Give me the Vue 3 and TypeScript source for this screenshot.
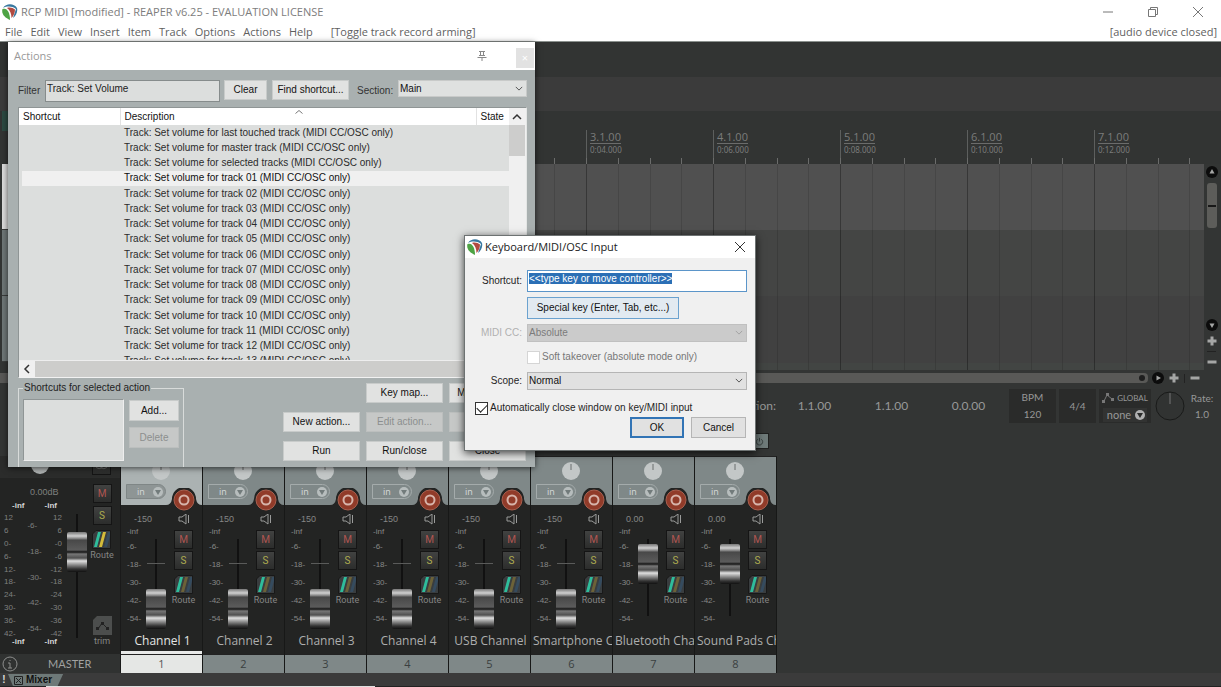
<script setup lang="ts">
import { onMounted, ref } from 'vue'

interface Channel {
  id: number
  name: string
  level: string
  value: number
}

const menus = ['File', 'Edit', 'View', 'Insert', 'Item', 'Track', 'Options', 'Actions', 'Help']

const bars = [1, 2, 3, 4, 5, 6, 7].map((n) => ({
  n,
  bar: `${n}.1.00`,
  time: `0:${String((n - 1) * 2).padStart(2, '0')}.000`,
}))
const firstLabelled = 3

const targets = [
  'last touched track',
  'master track',
  'selected tracks',
  ...Array.from({ length: 13 }, (_, i) => `track ${String(i + 1).padStart(2, '0')}`),
]
const actions = targets.map((t) => `Track: Set volume for ${t} (MIDI CC/OSC only)`)
const selectedAction = 3

const channels: Channel[] = [
  { id: 1, name: 'Channel 1', level: '-150', value: 0 },
  { id: 2, name: 'Channel 2', level: '-150', value: 0 },
  { id: 3, name: 'Channel 3', level: '-150', value: 0 },
  { id: 4, name: 'Channel 4', level: '-150', value: 0 },
  { id: 5, name: 'USB Channel', level: '-150', value: 0 },
  { id: 6, name: 'Smartphone Channel', level: '-150', value: 0 },
  { id: 7, name: 'Bluetooth Channel', level: '0.00', value: 90 },
  { id: 8, name: 'Sound Pads Channel', level: '0.00', value: 90 },
]

const scale = ['-6-', '-18-', '-30-', '-42-', '-54-']
const masterLeft = ['12', '6', '0-', '6-', '12-', '18-', '24-', '30-', '36-', '42-']
const masterRight = ['12', '6', '-0', '-6', '-12', '-18', '-24', '-30', '-36', '-42']

const filter = ref('Track: Set Volume')
const shortcut = ref('<<type key or move controller>>')
const shortcutBox = ref<HTMLInputElement | null>(null)

onMounted(() => {
  shortcutBox.value?.focus()
  shortcutBox.value?.select()
})
</script>

<template>
  <div class="app">
    <header class="titlebar">
      <svg class="logo" viewBox="0 0 16 16" aria-hidden="true">
        <path d="M1 4C4 -1 12 -1 15 4C16 8 14 12 11 14L14 5C10 2 5 2 1 4Z" fill="#3878a0" />
        <path d="M0.5 5C3 4 5 5 6.500 8C7.500 10 8 13 8 16C3 14 -1 10 0.500 5Z" fill="#4ea344" />
        <path d="M5 4C8 3 11 4 13 5.500C13 9 11.500 12 9.500 14C9.500 10 8 6 5 4Z" fill="#b24a41" />
      </svg>
      <h1>RCP MIDI [modified] - REAPER v6.25 - EVALUATION LICENSE</h1>
      <div class="window-controls">
        <button aria-label="Minimize"><svg viewBox="0 0 12 12"><path d="M1 6H11" /></svg></button>
        <button aria-label="Restore"><svg viewBox="0 0 12 12"><path d="M1.5 3.5H8.5V10.5H1.5ZM3.5 3.5V1.5H10.5V8.5H8.5" /></svg></button>
        <button aria-label="Close"><svg viewBox="0 0 12 12"><path d="M1 1L11 11M11 1L1 11" /></svg></button>
      </div>
    </header>

    <nav class="menubar">
      <button v-for="m in menus" :key="m">{{ m }}</button>
      <span class="last-action">[Toggle track record arming]</span>
      <span class="device">[audio device closed]</span>
    </nav>

    <div class="toolbar"></div>
    <div class="band"></div>

    <div class="ruler">
      <div class="ruler-head"><i></i></div>
      <div class="bars">
        <div v-for="b in bars" :key="b.bar" class="bar">
          <div class="bar-label"><template v-if="b.n >= firstLabelled"><span>{{ b.bar }}</span><small>{{ b.time }}</small></template></div>
          <div class="beats"><i></i><i></i><i></i><i></i></div>
        </div>
      </div>
    </div>

    <div class="arrange">
      <div class="tracks"><i class="first"></i><i></i><i></i></div>
      <div class="lanes">
        <div class="lane-grid">
          <div v-for="b in bars" :key="b.bar" class="lane-bar"><i></i><i></i><i></i><i></i></div>
        </div>
      </div>
      <div class="vscroll">
        <button class="round" aria-label="Scroll up"><svg viewBox="0 0 12 12"><circle cx="6" cy="6" r="6" /><path d="M6 3L8.500 7.500H3.500Z" /></svg></button>
        <div class="vthumb"><i></i></div>
        <span class="grow"></span>
        <button class="round" aria-label="Scroll down"><svg viewBox="0 0 12 12"><circle cx="6" cy="6" r="6" /><path d="M6 9L8.500 4.500H3.500Z" /></svg></button>
        <button class="round" aria-label="Zoom in"><svg viewBox="0 0 12 12"><path d="M4.500 1.500H7.500V4.500H10.500V7.500H7.500V10.500H4.500V7.500H1.500V4.500H4.500Z" /></svg></button>
        <hr />
        <button class="round" aria-label="Zoom out"><svg viewBox="0 0 12 12"><path d="M1.500 4.500H10.500V7.500H1.500Z" /></svg></button>
      </div>
    </div>

    <div class="hscroll">
      <div class="hthumb"><i></i></div>
      <button class="round" aria-label="Scroll right"><svg viewBox="0 0 12 12"><circle cx="6" cy="6" r="6" /><path d="M4.500 3.500L9 6L4.500 8.500Z" /></svg></button>
      <button class="round" aria-label="Zoom in"><svg viewBox="0 0 12 12"><path d="M4.500 1.500H7.500V4.500H10.500V7.500H7.500V10.500H4.500V7.500H1.500V4.500H4.500Z" /></svg></button>
      <hr />
      <button class="round" aria-label="Zoom out"><svg viewBox="0 0 12 12"><path d="M1.500 4.500H10.500V7.500H1.500Z" /></svg></button>
    </div>

    <div class="transport">
      <span>Selection:</span>
      <span class="time">1.1.00</span>
      <span class="time">1.1.00</span>
      <span class="time">0.0.00</span>
      <div class="tbox bpm"><span>BPM</span><span>120</span></div>
      <div class="tbox sig"><span>4/4</span></div>
      <div class="tbox global">
        <span class="global-title">
          <svg viewBox="0 0 13 10"><path d="M2 8L5 2L10 6" /><path class="dots" d="M0 7H3V10H0ZM4 0H7V3H4ZM9 5H12V8H9Z" /></svg>
          GLOBAL
        </span>
        <button class="none">none <svg viewBox="0 0 12 12"><circle cx="6" cy="6" r="5" /><path d="M6 9L9 4H3Z" /></svg></button>
      </div>
      <svg class="dial" viewBox="0 0 30 30" aria-hidden="true"><circle cx="15" cy="15" r="14" /><path d="M15 2V13" /></svg>
      <div class="rate"><span>Rate:</span><span>1.0</span></div>
    </div>

    <div class="gap">
      <button class="power" aria-label="Bypass effects"><svg viewBox="0 0 10 10"><path d="M3 2.5A3.5 3.5 0 1 0 7 2.5M5 1V5" /></svg></button>
    </div>

    <div class="mixer">
      <section class="master">
        <div class="master-top">
          <svg class="knob" viewBox="0 0 18 18"><circle cx="9" cy="9" r="9" /><path d="M9 2V8" /></svg>
          <button class="sq" aria-label="Mono"><svg viewBox="0 0 19 19"><circle cx="7" cy="9" r="4" /><circle cx="12" cy="9" r="4" /></svg></button>
        </div>
        <div class="master-body">
          <div class="meters">
            <span class="db">0.00dB</span>
            <div class="inf"><b>-inf</b><b>-inf</b></div>
            <div class="scales">
              <div class="sc left"><span v-for="s in masterLeft" :key="s">{{ s }}</span></div>
              <div class="sc mid"><span v-for="s in scale" :key="s">{{ s }}</span></div>
              <div class="sc right"><span v-for="s in masterRight" :key="s">{{ s }}</span></div>
            </div>
            <div class="inf"><b>-inf</b><b>-inf</b></div>
          </div>
          <input class="fader master-fader" type="range" min="0" max="100" value="79" aria-label="Master volume" />
          <div class="buttons">
            <button class="sq mute">M</button>
            <button class="sq solo">S</button>
            <button class="route lit">
              <svg viewBox="0 0 19 19"><path class="bg" d="M4 0.500H18.500V18.500H0.500V4Z" /><path class="g" d="M6 2H9L5 17H2Z" /><path class="y" d="M11 2H14L10 17H7Z" /><path class="b" d="M16 2H18V6L15 17H12Z" /></svg>
              Route
            </button>
            <span class="grow"></span>
            <button class="route">
              <svg viewBox="0 0 19 19"><path class="trim-bg" d="M4 0H19V19H0V4Z" /><path class="trim-line" d="M5 13L9 7L14 12" /><path class="trim-dots" d="M3 11H6V14H3ZM8 6H11V9H8ZM13 11H16V14H13Z" /></svg>
              trim
            </button>
          </div>
        </div>
        <div class="master-name"><svg viewBox="0 0 16 16"><circle cx="8" cy="8" r="7" /><path d="M8 7V12M6 7H8M6 12H10M8 4V5" /></svg><span>MASTER</span></div>
      </section>

      <section v-for="c in channels" :key="c.id" class="channel" :class="{ selected: c.id === 1 }">
        <div class="ch-head">
          <svg class="knob" viewBox="0 0 18 18"><circle cx="9" cy="9" r="9" /><path d="M9 2V8" /></svg>
          <button class="in"><span>in</span><svg viewBox="0 0 12 12"><circle cx="6" cy="6" r="5" /><path d="M3 4H9L6 9Z" /></svg></button>
          <button class="rec" aria-label="Record arm">
            <svg viewBox="0 0 36 26">
              <path d="M0 17Q5 17 6 11A12 12 0 0 1 30 11Q31 17 36 17V26H0Z" fill="#232423" />
              <circle cx="18" cy="12" r="10" fill="#913b29" stroke="#a9604f" />
              <circle cx="18" cy="12" r="4.5" fill="none" stroke="#d7b4aa" stroke-width="2" />
            </svg>
          </button>
        </div>
        <div class="level">
          <span>{{ c.level }}</span>
          <svg viewBox="0 0 12 12"><path d="M1 4H4L8 1V11L4 8H1ZM10.500 2V10" /></svg>
        </div>
        <div class="strip">
          <div class="ch-scale"><span class="ch-inf">-inf</span><span v-for="s in scale" :key="s">{{ s }}</span></div>
          <input class="fader" :class="{ tick: c.value === 0 }" type="range" min="0" max="100" :value="c.value" :aria-label="c.name + ' volume'" />
          <div class="buttons">
            <button class="sq mute">M</button>
            <button class="sq solo">S</button>
            <button class="route">
              <svg viewBox="0 0 19 19"><path class="bg" d="M4 0.500H18.500V18.500H0.500V4Z" /><path class="g" d="M6 2H9L5 17H2Z" /><path class="y" d="M11 2H14L10 17H7Z" /><path class="b" d="M16 2H18V6L15 17H12Z" /></svg>
              Route
            </button>
          </div>
        </div>
        <div class="ch-name"><span>{{ c.name }}</span></div>
        <div class="ch-num">{{ c.id }}</div>
      </section>
    </div>

    <footer class="tabs">
      <span class="bang">!</span>
      <button class="tab"><svg viewBox="0 0 9 9"><path d="M0.5 0.5H8.5V8.5H0.5ZM2 2L7 7M7 2L2 7" /></svg>Mixer</button>
    </footer>

    <section class="window actions" aria-label="Actions">
      <div class="win-title">
        <span>Actions</span>
        <button class="pin" aria-label="Pin"><svg viewBox="0 0 10 12"><path d="M2 1.500H8M3.500 1.500V5.500M6.500 1.500V5.500M2 5.500H8M0.500 7.500H9.500M5 7.500V11" /></svg></button>
        <button class="x" aria-label="Close">×</button>
      </div>
      <div class="win-body">
        <div class="filter-row">
          <label for="filter">Filter</label>
          <input id="filter" v-model="filter" type="text" />
          <button class="btn clear">Clear</button>
          <button class="btn find">Find shortcut...</button>
          <label for="section">Section:</label>
          <div class="select"><select id="section"><option>Main</option></select><svg viewBox="0 0 10 6"><path d="M1 1L5 5L9 1" /></svg></div>
        </div>
        <div class="list">
          <div class="list-view">
            <table>
              <thead>
                <tr><th class="c1">Shortcut</th><th class="c2">Description<svg viewBox="0 0 8 4"><path d="M0.5 3.5L4 0.5L7.5 3.5" /></svg></th><th class="c3">State</th></tr>
              </thead>
              <tbody>
                <tr v-for="(a, i) in actions" :key="a" :class="{ current: i === selectedAction }"><td></td><td>{{ a }}</td><td></td></tr>
              </tbody>
            </table>
            <div class="list-scroll"><svg viewBox="0 0 10 8"><path d="M1 6L5 2L9 6" /></svg><i></i></div>
          </div>
          <div class="list-hscroll"><svg viewBox="0 0 8 10"><path d="M6 1L2 5L6 9" /></svg><i></i></div>
        </div>
        <div class="lower">
          <fieldset>
            <legend>Shortcuts for selected action</legend>
            <div class="keys" role="listbox" aria-label="Shortcuts"></div>
            <div class="key-btns"><button class="btn">Add...</button><button class="btn" disabled>Delete</button></div>
          </fieldset>
          <div class="btn-grid">
            <span></span><button class="btn">Key map...</button><button class="btn">Menu editor...</button>
            <button class="btn">New action...</button><button class="btn" disabled>Edit action...</button><button class="btn" disabled aria-label="Delete action"></button>
            <button class="btn">Run</button><button class="btn">Run/close</button><button class="btn">Close</button>
          </div>
        </div>
      </div>
    </section>

    <section class="window dialog" role="dialog" aria-label="Keyboard/MIDI/OSC Input">
      <div class="dlg-title">
        <svg class="logo" viewBox="0 0 16 16" aria-hidden="true">
          <path d="M1 4C4 -1 12 -1 15 4C16 8 14 12 11 14L14 5C10 2 5 2 1 4Z" fill="#3878a0" />
          <path d="M0.5 5C3 4 5 5 6.500 8C7.500 10 8 13 8 16C3 14 -1 10 0.500 5Z" fill="#4ea344" />
          <path d="M5 4C8 3 11 4 13 5.500C13 9 11.500 12 9.500 14C9.500 10 8 6 5 4Z" fill="#b24a41" />
        </svg>
        <span>Keyboard/MIDI/OSC Input</span>
        <button aria-label="Close"><svg viewBox="0 0 12 12"><path d="M1 1L11 11M11 1L1 11" /></svg></button>
      </div>
      <div class="form">
        <label for="shortcut">Shortcut:</label>
        <input id="shortcut" ref="shortcutBox" v-model="shortcut" type="text" />
        <button class="special">Special key (Enter, Tab, etc...)</button>
        <label for="cc" class="off">MIDI CC:</label>
        <div class="select off"><select id="cc" disabled><option>Absolute</option></select><svg viewBox="0 0 10 6"><path d="M1 1L5 5L9 1" /></svg></div>
        <label class="check soft"><input type="checkbox" disabled />Soft takeover (absolute mode only)</label>
        <label for="scope">Scope:</label>
        <div class="select"><select id="scope"><option>Normal</option></select><svg viewBox="0 0 10 6"><path d="M1 1L5 5L9 1" /></svg></div>
      </div>
      <label class="check auto"><input type="checkbox" checked />Automatically close window on key/MIDI input</label>
      <div class="dlg-btns"><button class="ok">OK</button><button>Cancel</button></div>
    </section>
  </div>
</template>

<style>
body { background: #333534; }
</style>

<style scoped>
* { box-sizing: border-box; }
.app {
  position: relative;
  display: flex;
  flex-direction: column;
  min-height: 100vh;
  overflow: hidden;
  background: #333534;
  color: #8f9090;
  font-family: "Open Sans", "Noto Sans", sans-serif;
  font-size: 12px;
  line-height: 16px;
}
button { border: 0; padding: 0; background: none; color: inherit; font: inherit; }
svg { display: block; flex: none; }
.grow { flex: 1; }

.titlebar { display: flex; align-items: center; height: 23px; background: #fff; padding-left: 2px; color: #7d7d7d; }
.logo { width: 16px; height: 16px; }
.titlebar h1 { margin: 0 0 0 3px; font-size: 11px; font-weight: 400; }
.window-controls { display: flex; margin-left: auto; padding-right: 1px; }
.window-controls button { width: 45px; height: 22px; display: grid; place-items: center; }
.window-controls svg { width: 12px; height: 12px; fill: none; stroke: #777; }

.menubar { display: flex; align-items: center; height: 19px; padding: 0 4px 0 5px; background: #fff; border-bottom: 1px solid #8b918e; color: #5f5f5f; font-size: 11px; gap: 8px; }
.last-action { margin-left: 10px; }
.device { margin-left: auto; }

.toolbar { height: 35px; background: #323433; }
.band { height: 34px; background: #3b3b3b; }

.ruler { display: flex; height: 53px; background: #323433; }
.ruler-head { flex: none; width: 332px; }
.ruler-head i { display: block; width: 20px; height: 20px; margin-left: 2px; background: #2c4a42; }
.bars { display: flex; flex: 1; overflow: hidden; }
.bar { flex: none; width: 127px; display: flex; flex-direction: column; justify-content: space-between; margin-top: 19px; border-left: 1px solid #5d5f5e; }
.bar-label { display: flex; flex-direction: column; align-items: flex-start; padding-left: 3px; color: #7b7c7b; font-size: 11px; line-height: 13px; }
.bar-label span { border-bottom: 1px solid #6b6c6b; }
.bar-label small { font-family: "Noto Sans", sans-serif; font-size: 8px; line-height: 12px; }
.beats { display: grid; grid-template-columns: repeat(4, 1fr); height: 6px; margin-left: -1px; }
.beats i { border-left: 1px solid #6b6c6b; }

.arrange { display: flex; flex: 1; min-height: 206px; }
.tracks { flex: none; width: 332px; padding-left: 2px; }
.tracks i { display: block; height: 66px; background: #6f7777; border-bottom: 1px solid #3b3d3c; }
.tracks i.first { background: #dcdcdc; }
.lanes { flex: 1; overflow: hidden; background: linear-gradient(#505050 0 66px, #444544 66px 132px, #414141 132px 199px, #424543 199px); }
.lane-grid { display: flex; height: 100%; }
.lane-bar { flex: none; width: 127px; display: grid; grid-template-columns: repeat(4, 1fr); }
.lane-bar i { border-left: 1px solid #0000001f; }
.lane-bar i:first-child { border-color: #00000050; }
.vscroll { display: flex; flex-direction: column; align-items: center; width: 17px; padding: 2px 2px 2px 0; gap: 4px; }
.vthumb { display: grid; place-items: center; width: 10px; height: 45px; margin-top: 1px; border-radius: 3px; background: #5d5d5a; }
.vthumb i { width: 8px; height: 2px; background: #181818; }
.round svg { width: 12px; height: 12px; fill: #0c0c0c; }
.round path { fill: #a5a6a5; }
.vscroll hr { width: 9px; height: 1px; margin: 0; border: 0; background: #222; }

.hscroll { display: flex; align-items: center; height: 16px; padding-right: 20px; gap: 4px; }
.hthumb { flex: 1; display: flex; align-items: center; justify-content: flex-end; height: 10px; padding-right: 3px; border-radius: 0 4px 4px 0; background: #595957; }
.hthumb i { width: 6px; height: 6px; border-radius: 3px; background: #1e1e1e; }
.hscroll hr { width: 1px; height: 9px; margin: 0; border: 0; background: #222; }

.transport { display: flex; align-items: center; justify-content: flex-end; height: 39px; padding-right: 2px; color: #979898; font-family: Lato, sans-serif; font-size: 12px; }
.time { width: 77px; text-align: center; }
.tbox { display: flex; flex-direction: column; align-items: center; justify-content: space-around; height: 34px; margin-right: 3px; background: #2a2b2a; font-size: 10px; }
.bpm { width: 47px; margin-left: 2px; }
.sig { width: 37px; }
.global { width: 52px; }
.global-title { display: flex; align-items: center; gap: 2px; font-size: 8px; }
.global-title svg { width: 13px; height: 10px; fill: none; stroke: #777; }
.global-title .dots { fill: #777; stroke: none; }
.none { display: flex; align-items: center; gap: 3px; padding: 0 1px 0 4px; font-size: 11px; line-height: 14px; background: #323332; }
.none svg { width: 12px; height: 12px; fill: #b0b0b0; }
.none path { fill: #2a2b2a; }
.dial { width: 30px; height: 30px; margin-left: 1px; fill: #313332; stroke: #191a19; }
.dial path { stroke: #777; }
.rate { display: flex; flex-direction: column; width: 34px; align-items: center; font-size: 10px; }

.gap { height: 31px; padding: 8px 0 0 749px; }
.power { display: grid; place-items: center; width: 20px; height: 16px; background: #6f7b7a; border: 1px solid #202120; }
.power svg { width: 9px; height: 9px; fill: none; stroke: #333b3a; }

.mixer { display: flex; height: 217px; color: #858685; }
.master { display: flex; flex-direction: column; flex: none; width: 121px; background: #2b2c2b; border-right: 1px solid #1a1a1a; }
.master-top { display: flex; height: 22px; padding-left: 31px; gap: 43px; }
.knob { width: 18px; height: 18px; fill: #aeb2b2; }
.knob path { stroke: #6a6f6f; }
.sq { display: grid; place-items: center; width: 19px; height: 19px; background: linear-gradient(#414241, #2c2d2c); border: 1px solid #151515; font-family: Roboto, sans-serif; font-size: 10px; line-height: 17px; }
.sq svg { width: 17px; height: 17px; fill: none; stroke: #777; }
.mute { color: #b05551; }
.solo { color: #aeac50; }
.master-body { flex: 1; display: flex; background: #232423; padding: 0 2px 0 3px; }
.meters { width: 64px; font-family: "Liberation Sans", Arial, sans-serif; font-size: 8px; line-height: 12px; color: #7f807f; }
.db { display: block; margin-top: 8px; padding-left: 27px; font-size: 9px; line-height: 12px; }
.inf { display: flex; justify-content: space-between; padding: 2px 10px 0 9px; color: #d5d5d5; }
.scales { display: flex; justify-content: space-between; padding: 0 5px 0 1px; height: 128px; }
.inf + .scales + .inf { margin-top: -6px; }
.sc { display: flex; flex-direction: column; justify-content: space-between; }
.sc.mid { padding: 8px 0 5px 3px; }
.sc.right { text-align: right; }
.buttons { flex: 1; display: flex; flex-direction: column; align-items: center; gap: 3px; }
.master-body .buttons { padding: 6px 1px 8px 0; }
.route { display: flex; flex-direction: column; align-items: center; gap: 1px; font-family: Roboto, sans-serif; font-size: 9px; line-height: 10px; margin-top: 2px; }
.route svg { width: 19px; height: 19px; }
.route .bg { fill: #393d3f; stroke: #181818; }
.route .g { fill: #2fbd9b; }
.route .y { fill: #6c6238; }
.route.lit .y { fill: #d3bb3a; }
.route .b { fill: #354b5e; }
.trim-bg { fill: #4c4e4d; }
.trim-line { fill: none; stroke: #222; }
.trim-dots { fill: #222; }
.master-name { display: flex; align-items: center; height: 19px; padding-left: 2px; background: #303231; color: #a0a1a0; font-family: Lato, sans-serif; font-size: 11px; }
.master-name svg { width: 16px; height: 16px; fill: none; stroke: #8d8e8d; }
.master-name span { margin-left: 30px; }

.channel { display: flex; flex-direction: column; flex: none; width: 82px; background: #232423; border-right: 1px solid #171817; border-top: 1px solid #222; }
.ch-head { position: relative; height: 48px; padding: 5px 0 0 5px; background: #7f8888; }
.selected .ch-head { background: #abb2b2; }
.ch-head .knob { margin-left: 26px; fill: #c3c7c7; }
.in { display: flex; align-items: center; justify-content: space-between; width: 40px; height: 15px; margin-top: 4px; padding: 0 1px 0 10px; border: 1px solid #a4abab; border-radius: 0 8px 8px 0; color: #d6dada; font-size: 9px; line-height: 10px; }
.selected .in { background: #8e9595; border-color: #7f8686; }
.in svg { width: 12px; height: 12px; fill: #b7bdbd; }
.in path { fill: #727b7b; }
.rec { position: absolute; right: 0; bottom: -9px; width: 36px; height: 26px; }
.rec svg { width: 36px; height: 26px; }
.level { display: flex; align-items: center; justify-content: space-between; height: 20px; margin-top: 4px; padding: 0 12px 0 13px; font-family: "Liberation Sans", Arial, sans-serif; font-size: 9px; line-height: 12px; color: #858685; }
.level svg { width: 12px; height: 12px; fill: none; stroke: #9a9b9a; }
.strip { flex: 1; display: flex; }
.ch-scale { display: flex; flex-direction: column; width: 25px; padding-left: 6px; margin-top: -3px; font-family: "Liberation Sans", Arial, sans-serif; font-size: 8px; line-height: 18px; color: #878887; }
.ch-scale .ch-inf { line-height: 12px; }
.fader {
  flex: none;
  width: 20px;
  height: 90px;
  margin: 10px 0 0;
  appearance: none;
  writing-mode: vertical-lr;
  direction: rtl;
  background: linear-gradient(#111, #111) center top / 2px 77px no-repeat;
}
.fader.tick { background: linear-gradient(#5a5b5a, #5a5b5a) center 24px / 18px 1px no-repeat, linear-gradient(#111, #111) center top / 2px 90px no-repeat; }
.fader::-webkit-slider-thumb {
  appearance: none;
  width: 20px;
  height: 40px;
  border-radius: 2px;
  background: linear-gradient(#777 0, #d0d0d0 4px, #777 7px, #484848 8px, #5b5b5b 18px, #151515 20px, #777 22px, #505050 26px, #e0e0e0 29px, #888 33px, #333 37px, #111 40px);
}
.master-fader { height: 124px; margin: 36px 0 0; background: linear-gradient(#111, #111) center / 2px 124px no-repeat; }
.strip .buttons { gap: 2px; padding: 1px 1px 0 0; }
.strip .route { margin-top: 3px; }
.ch-name { height: 22px; padding: 0 0 0 2px; display: flex; color: #adaeae; white-space: nowrap; line-height: 18px; }
.ch-name span { margin: 0 auto; min-width: 0; overflow: hidden; }
.selected .ch-name { color: #e4e4e4; border-bottom: 3px solid #e8e9e8; }
.ch-num { height: 19px; background: #7f8888; border-top: 1px solid #222; color: #3a3f3f; text-align: center; font-size: 11px; line-height: 18px; }
.selected .ch-num { background: #e5e7e5; color: #555; }

.tabs { display: flex; align-items: center; height: 14px; background: linear-gradient(90deg, #0000 46px, #e0e0e0 46px 375px, #0000 375px) bottom / 100% 1px no-repeat, linear-gradient(#3b3b3b 0 13px, #222 13px); color: #ddd; font-family: "Liberation Sans", Arial, sans-serif; font-size: 10px; font-weight: 700; line-height: 12px; }
.bang { width: 8px; text-align: center; }
.tab { display: flex; align-items: center; gap: 3px; height: 12px; padding: 0 11px 0 6px; color: #111; background: #6e7978; clip-path: polygon(0 0, 100% 0, 90% 100%, 9% 100%); }
.tab svg { width: 9px; height: 9px; fill: none; stroke: #222; }

.window { position: absolute; font-family: "Liberation Sans", Arial, sans-serif; font-size: 10px; line-height: 14px; color: #1f1f1f; }
.actions { left: 8px; top: 42px; width: 527px; background: #a9b0b0; box-shadow: 0 1px 6px #000a; }
.win-title { display: flex; align-items: center; height: 28px; padding-left: 6px; background: #fff; color: #999; font-family: "Open Sans", sans-serif; font-size: 11px; }
.pin { margin: 0 29px 0 auto; }
.pin svg { width: 10px; height: 12px; fill: none; stroke: #888; }
.x { align-self: flex-end; width: 18px; height: 20px; margin-bottom: 2px; margin-right: 1px; background: #e2e2e2; color: #fff; }
.win-body { padding: 10px 8px 0 10px; }
.filter-row { display: flex; align-items: flex-start; height: 27px; }
.filter-row label { padding-top: 4px; color: #333; }
#filter { width: 175px; height: 22px; margin: 0 4px 0 auto; padding: 0 0 5px 1px; border: 1px solid #868c8c; outline: 0; background: #dcdedd; color: #222; font: inherit; }
.btn { height: 20px; background: #e1e2e1; border: 1px solid #c8cbca; color: #111; line-height: 12px; }
.btn:disabled { background: #c6c8c7; border-color: #bcbfbe; color: #8c8f8e; }
.clear { width: 43px; margin-right: 5px; }
.find { width: 77px; margin-right: 8px; }
.select { position: relative; flex: none; width: 129px; height: 17px; margin-left: auto; }
.select select { width: 100%; height: 100%; appearance: none; padding: 0 1px; border: 1px solid #c8cac9; border-radius: 0; background: #dfe1e0; color: #111; font: inherit; opacity: 1; }
.select svg { position: absolute; right: 4px; top: 6px; width: 8px; height: 5px; fill: none; stroke: #333; pointer-events: none; }
.list { border: 1px solid #8f9595; border-right-color: #e4e6e5; border-bottom-color: #f2f2f2; background: #dcdedd; }
.list-view { display: flex; height: 252px; overflow: hidden; }
table { flex: 1; height: 261px; border-collapse: collapse; table-layout: fixed; color: #2b2b2b; }
th { height: 17px; padding: 0 0 0 4px; background: #fff; border-right: 1px solid #e2e2e2; color: #111; font-weight: 400; text-align: left; line-height: 14px; }
th svg { display: inline-block; width: 8px; height: 4px; margin: 0 0 9px 120px; vertical-align: middle; fill: none; stroke: #777; }
.c1 { width: 101px; }
.c3 { width: 33px; border: 0; }
td { padding: 0 0 0 4px; line-height: 14px; white-space: nowrap; }
.current td { background: #f0f0f0; color: #111; }
.current td:first-child { background: linear-gradient(90deg, #dcdedd 3px, #f0f0f0 3px); }
.list-scroll { width: 17px; background: #f0f0f0; }
.list-scroll svg { width: 10px; height: 8px; margin: 5px 3px 4px; fill: none; stroke: #333; stroke-width: 1.5; }
.list-scroll i { display: block; height: 31px; margin-right: 1px; background: #cdcdcc; }
.list-hscroll { display: flex; align-items: center; height: 17px; background: #f0f0f0; border-top: 1px solid #eee; }
.list-hscroll svg { width: 8px; height: 10px; margin: 0 4px; fill: none; stroke: #333; stroke-width: 1.5; }
.list-hscroll i { flex: 1; height: 16px; background: #cdcdcb; }
.lower { display: flex; justify-content: space-between; padding: 4px 1px 0 0; }
fieldset { display: flex; gap: 5px; width: 166px; height: 85px; margin: 0; padding: 5px 4px; border: 1px solid #d8dbda; border-bottom: 0; }
legend { padding: 0 1px; line-height: 12px; color: #222; }
.keys { width: 101px; height: 62px; background: #dcdedd; border: 1px solid #8f9595; border-right-color: #eee; border-bottom-color: #eee; }
.key-btns { display: flex; flex-direction: column; gap: 6px; padding-top: 1px; }
.key-btns .btn { width: 50px; height: 21px; }
.btn-grid { display: grid; grid-template-columns: repeat(3, 77px); grid-auto-rows: 20px; gap: 9px 6px; padding-top: 1px; }

.dialog { left: 464px; top: 235px; width: 292px; height: 216px; background: #f0f0f0; border: 1px solid #6d7272; box-shadow: 0 2px 8px #000b; }
.dlg-title { display: flex; align-items: center; height: 22px; padding: 0 9px 0 2px; background: #fff; color: #222; font-family: "Open Sans", sans-serif; font-size: 11px; }
.dlg-title span { margin: 0 auto 0 2px; }
.dlg-title button svg { width: 12px; height: 12px; fill: none; stroke: #333; }
.form { display: grid; grid-template-columns: 1fr 220px; column-gap: 5px; row-gap: 5px; padding: 12px 8px 0 0; align-items: center; }
.form > label { text-align: right; }
#shortcut { height: 22px; padding: 0 1px 5px; border: 1px solid #5b95c9; outline: 0; background: #fff; color: #222; font: inherit; line-height: 14px; }
#shortcut::selection { background: #2b6fb5; color: #fff; }
.special { grid-column: 2; width: 152px; height: 22px; border: 1px solid #6ba2cf; background: #e2eaf1; color: #111; }
.form .select { width: 220px; height: 18px; }
.form .select select { border-color: #b5b5b5; background: #e1e1e1; }
.form .off { color: #b0b0b0; }
.form .off select { background: #cbcbcb; border-color: #c0c0c0; color: #7b7b7b; }
.form .off svg { stroke: #999; }
.check { display: flex; align-items: center; gap: 2px; }
.check input { appearance: none; flex: none; display: grid; place-items: center; width: 13px; height: 13px; margin: 0; border: 1px solid #333; background: #fff; }
.check input:checked::before { content: ""; width: 9px; height: 5px; margin-bottom: 3px; border: solid #222; border-width: 0 0 1px 1px; transform: rotate(-45deg); }
.check input:disabled { border-color: #d5d5d5; }
.form > .soft { grid-column: 2; height: 20px; color: #777; }
.auto { padding: 11px 0 0 10px; }
.dlg-btns { display: flex; justify-content: flex-end; gap: 7px; padding: 2px 9px 0 0; }
.dlg-btns button { width: 55px; height: 21px; border: 1px solid #b5b5b5; background: #e1e1e1; color: #111; }
.dlg-btns .ok { width: 54px; border: 2px solid #3274b5; }
</style>
